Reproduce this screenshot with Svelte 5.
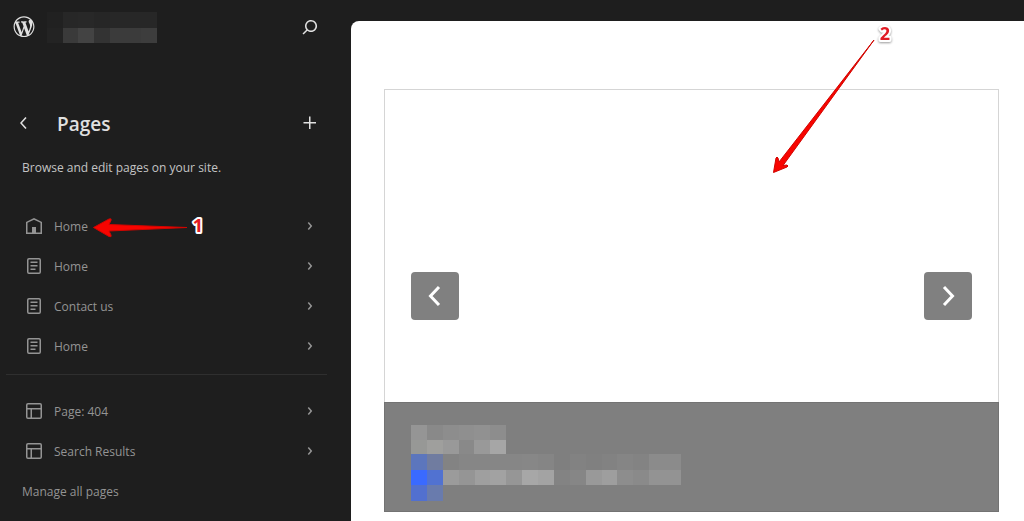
<script>
const icons = {
    wordpress: "M20 10c0-5.51-4.49-10-10-10C4.48 0 0 4.49 0 10c0 5.52 4.48 10 10 10 5.51 0 10-4.48 10-10zM7.78 15.37L4.37 6.22c.55-.02 1.17-.08 1.17-.08.5-.06.44-1.13-.06-1.11 0 0-1.45.11-2.37.11-.18 0-.37 0-.58-.01C4.12 2.69 6.87 1.11 10 1.11c2.33 0 4.45.87 6.05 2.34-.68-.11-1.65.39-1.65 1.58 0 .74.45 1.36.9 2.1.35.61.55 1.36.55 2.46 0 1.49-1.4 5-1.4 5l-3.03-8.37c.54-.02.82-.17.82-.17.5-.05.44-1.25-.06-1.22 0 0-1.44.12-2.38.12-.87 0-2.33-.12-2.33-.12-.5-.03-.56 1.2-.06 1.22l.92.08 1.26 3.41zM17.41 10c.24-.64.74-1.87.43-4.25.7 1.29 1.05 2.71 1.05 4.25 0 3.29-1.73 6.24-4.4 7.78.97-2.59 1.94-5.2 2.92-7.78zM6.1 18.09C3.12 16.65 1.11 13.53 1.11 10c0-1.3.23-2.48.72-3.59C3.25 10.3 4.67 14.2 6.1 18.09zm4.03-6.63l2.58 6.98c-.86.29-1.76.45-2.71.45-.79 0-1.57-.11-2.29-.33.81-2.38 1.62-4.74 2.42-7.1z",
    search: "M13 5c-3.3 0-6 2.7-6 6 0 1.4.5 2.7 1.3 3.7l-3.8 3.8 1.1 1.1 3.8-3.8c1 .8 2.3 1.3 3.7 1.3 3.3 0 6-2.7 6-6S16.3 5 13 5zm0 10.5c-2.5 0-4.5-2-4.5-4.5s2-4.5 4.5-4.5 4.5 2 4.5 4.5-2 4.5-4.5 4.5z",
    back: "M14.6 7l-1.2-1L8 12l5.4 6 1.2-1-4.6-5z",
    plus: "M11 12.5V18H12.5V12.5H18V11H12.5V5.5H11V11H5.5V12.5H11Z",
    chevron: "M10.86 8.04L14.28 12.03L10.86 16.02L9.72 15.04L12.3 12.03L9.72 9.02L10.86 8.04Z",
    home: "M12 4L4 7.9V20h16V7.9L12 4zm6.5 14.5H14V13h-4v5.5H5.5V8.8L12 5.7l6.5 3.1v9.7z",
    page: "M15.5 7.5h-7V9h7V7.5ZM8.5 11h7v1.5h-7V11ZM13.5 14.5h-5V16h5v-1.5ZM17 4H7a2 2 0 0 0-2 2v12a2 2 0 0 0 2 2h10a2 2 0 0 0 2-2V6a2 2 0 0 0-2-2ZM7 5.5h10a.5.5 0 0 1 .5.5v12a.5.5 0 0 1-.5.5H7a.5.5 0 0 1-.5-.5V6a.5.5 0 0 1 .5-.5Z",
    layout: "M18 5.5H6a.5.5 0 0 0-.5.5v3h13V6a.5.5 0 0 0-.5-.5zm.5 5H10v8h8a.5.5 0 0 0 .5-.5v-7.5zm-10 0h-3V18a.5.5 0 0 0 .5.5h2.5v-8zM6 4h12a2 2 0 0 1 2 2v12a2 2 0 0 1-2 2H6a2 2 0 0 1-2-2V6a2 2 0 0 1 2-2z"
};

const pages = [
    { title: "Home", icon: "home" },
    { title: "Home", icon: "page" },
    { title: "Contact us", icon: "page" },
    { title: "Home", icon: "page" }
];

const templates = [
    { title: "Page: 404", icon: "layout" },
    { title: "Search Results", icon: "layout" }
];

// censored texts, one colour per block
const siteName = [
    ["#212121", "#272727", "#282828", "#262626", "#272727", "#272727", "#272727"],
    ["#232323", "#3a3a3a", "#434343", "#333333", "#3b3b3b", "#3b3b3b", "#3d3d3d"]
];
const slideTitle = [
    ["#959595", "#898989", "#8d8d8d", "#8f8f8f", "#919191", "#8d8d8d"],
    ["#979896", "#9f9f9d", "#999999", "#898989", "#999999", "#a6a6a6"]
];
const slideText = [
    ["#5c76bd", "#707ca0", "#838383", "#868686", "#868686", "#868686", "#868686", "#878787", "#858585", "#7f7f7f", "#828282", "#808080", "#828282", "#858585", "#838383", "#8b8b8b", "#8b8b8b"],
    ["#3a6aff", "#5172d1", "#9b9b9b", "#959595", "#9f9f9f", "#a2a2a2", "#969696", "#a7a7a7", "#a3a3a3", "#838383", "#868686", "#999999", "#9e9e9e", "#8d8d8d", "#8a8a8a", "#939393", "#939393"],
    ["#5270cf", "#697bad"]
];
</script>

<style>
    :global(body) {
        background: #1e1e1e;
    }
    .editor {
        display: flex;
        min-height: 100vh;
        background: #1e1e1e;
        color: #949494;
        font-family: "Open Sans", "Noto Sans", sans-serif;
        font-size: 12px;
        line-height: 16px;
    }
    svg {
        display: block;
        flex: none;
    }
    button {
        display: flex;
        align-items: center;
        justify-content: center;
        margin: 0;
        padding: 0;
        border: none;
        background: none;
        color: inherit;
        cursor: pointer;
    }
    a {
        color: inherit;
        text-decoration: none;
    }
    .icon {
        width: 24px;
        height: 24px;
        fill: currentColor;
    }
    .sidebar {
        position: relative;
        flex: none;
        box-sizing: border-box;
        width: 351px;
        padding: 11px 24px 0 6px;
    }
    .site {
        display: flex;
        align-items: center;
        height: 32px;
        padding: 0 5px 0 6px;
        color: #e0e0e0;
    }
    .name {
        flex: 1;
        padding-left: 11px;
    }
    .heading {
        display: flex;
        align-items: center;
        margin-top: 67px;
        padding: 0 5px 0 6px;
        color: #e0e0e0;
    }
    h1 {
        flex: 1;
        margin: 0;
        padding: 2px 0 0 21px;
        font-size: 19px;
        line-height: 24px;
        font-weight: 600;
    }
    .intro {
        margin: 24px 0 0;
        padding-left: 16px;
        color: #c4c4c4;
    }
    ul {
        margin: 0;
        padding: 0;
        list-style: none;
    }
    .pages {
        margin-top: 30px;
        padding-bottom: 8px;
        border-bottom: 1px solid #2f2f2f;
    }
    .templates {
        margin-top: 16px;
    }
    .row {
        display: flex;
        align-items: center;
        gap: 8px;
        height: 40px;
        padding: 0 5px 0 16px;
    }
    .row span {
        flex: 1;
        padding-top: 2px;
    }
    .manage {
        display: block;
        padding: 13px 16px;
    }
    .canvas {
        position: relative;
        flex: 1;
        margin-top: 21px;
        padding: 68px 25px 8px 33px;
        border-radius: 8px 0 0 0;
        background: #fff;
    }
    .slide {
        display: flex;
        align-items: flex-end;
        justify-content: space-between;
        box-sizing: border-box;
        height: 313px;
        padding: 0 26px 82px;
        border: 1px solid #d5d5d5;
        border-bottom: none;
    }
    .slide button {
        width: 48px;
        height: 48px;
        border-radius: 4px;
        background: #808080;
        color: #fff;
    }
    .slide .icon {
        fill: none;
        stroke: currentColor;
        stroke-width: 3;
    }
    .caption {
        box-sizing: border-box;
        height: 110px;
        padding: 22px 26px 0;
        border: 1px solid #737373;
        background: #7f7f7f;
    }
    .mark {
        position: absolute;
        overflow: visible;
        pointer-events: none;
    }
    .mark text {
        fill: #e01b24;
        stroke: #fff;
        stroke-width: 4;
        stroke-linejoin: round;
        paint-order: stroke;
        font-size: 18px;
        font-weight: 700;
        text-anchor: middle;
    }
    .arrow {
        fill: #f80400;
        stroke: #d00500;
        stroke-linejoin: round;
    }
    .first {
        left: 90px;
        top: 210px;
    }
    .second {
        left: 410px;
        top: 0;
    }
    .second text {
        filter: drop-shadow(0 1px 1px #999);
    }
</style>

{#snippet icon(name)}
    <svg class="icon" viewBox="0 0 24 24" aria-hidden="true"><path d={icons[name]} /></svg>
{/snippet}

{#snippet mosaic(rows, width, height)}
    <svg {width} {height} viewBox="0 0 {rows[0].length} {rows.length}" preserveAspectRatio="none" shape-rendering="crispEdges" aria-hidden="true">
        {#each rows as row, y}
            {#each row as color, x}
                <rect {x} {y} width="1" height="1" fill={color} />
            {/each}
        {/each}
    </svg>
{/snippet}

{#snippet list(items, name)}
    <ul class={name}>
        {#each items as item}
            <li>
                <a class="row" href="#page">
                    {@render icon(item.icon)}
                    <span>{item.title}</span>
                    {@render icon("chevron")}
                </a>
            </li>
        {/each}
    </ul>
{/snippet}

<div class="editor">
    <nav class="sidebar">
        <div class="site">
            <a href="#dashboard" aria-label="Dashboard">
                <svg class="icon" viewBox="-1.5 -1.2 23 23"><path d={icons.wordpress} /></svg>
            </a>
            <div class="name">{@render mosaic(siteName, 110, 31)}</div>
            <button aria-label="Search">{@render icon("search")}</button>
        </div>
        <div class="heading">
            <button aria-label="Back">{@render icon("back")}</button>
            <h1>Pages</h1>
            <button aria-label="Add page">{@render icon("plus")}</button>
        </div>
        <p class="intro">Browse and edit pages on your site.</p>
        {@render list(pages, "pages")}
        {@render list(templates, "templates")}
        <a class="manage" href="#all">Manage all pages</a>

        <svg class="mark first" width="120" height="32">
            <path class="arrow" d="M3.5 17.5L19 9Q22 8 21 10.5L19 14.5L97 17.5L19 21L21 25Q22 27.5 19 26.5Z" />
            <text x="108" y="22">1</text>
        </svg>
    </nav>

    <main class="canvas">
        <div class="slider">
            <div class="slide">
                <button aria-label="Previous slide">
                    <svg class="icon" viewBox="0 0 24 24"><path d="M16 3L7.5 12L16 21" /></svg>
                </button>
                <button aria-label="Next slide">
                    <svg class="icon" viewBox="0 0 24 24"><path d="M8 3L16.5 12L8 21" /></svg>
                </button>
            </div>
            <div class="caption">
                {@render mosaic(slideTitle, 95, 29)}
                {@render mosaic(slideText, 270, 47)}
            </div>
        </div>

        <svg class="mark second" width="140" height="160">
            <path class="arrow" d="M12.5 151.5L15 137Q16 135 17 137L18 141L113 19L22 144.5L26 144Q28 145 26 146Z" />
            <text x="124" y="19">2</text>
        </svg>
    </main>
</div>
